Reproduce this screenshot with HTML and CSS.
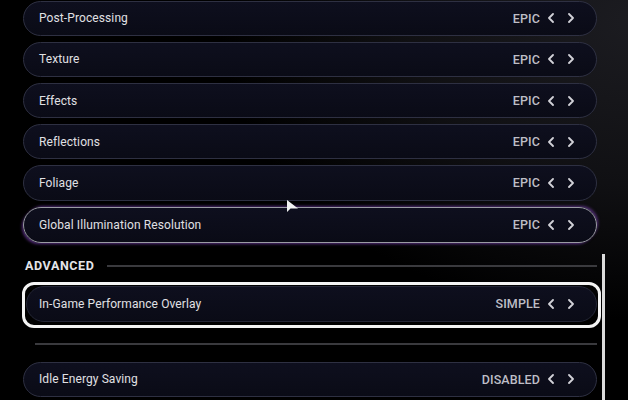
FILE: index.html
```html
<!DOCTYPE html>
<html>
<head>
<meta charset="utf-8">
<link rel="stylesheet" href="styles.css">
</head>
<body>
<div class="page">
  <div class="list">
    <div class="row"><span class="label">Post-Processing</span><span class="value">EPIC</span><span class="chevs"><svg width="8" height="10" viewBox="0 0 8 10"><path d="M6 1 L2 5 L6 9"/></svg><svg width="8" height="10" viewBox="0 0 8 10"><path d="M2 1 L6 5 L2 9"/></svg></span></div>
    <div class="row"><span class="label">Texture</span><span class="value">EPIC</span><span class="chevs"><svg width="8" height="10" viewBox="0 0 8 10"><path d="M6 1 L2 5 L6 9"/></svg><svg width="8" height="10" viewBox="0 0 8 10"><path d="M2 1 L6 5 L2 9"/></svg></span></div>
    <div class="row"><span class="label">Effects</span><span class="value">EPIC</span><span class="chevs"><svg width="8" height="10" viewBox="0 0 8 10"><path d="M6 1 L2 5 L6 9"/></svg><svg width="8" height="10" viewBox="0 0 8 10"><path d="M2 1 L6 5 L2 9"/></svg></span></div>
    <div class="row"><span class="label">Reflections</span><span class="value">EPIC</span><span class="chevs"><svg width="8" height="10" viewBox="0 0 8 10"><path d="M6 1 L2 5 L6 9"/></svg><svg width="8" height="10" viewBox="0 0 8 10"><path d="M2 1 L6 5 L2 9"/></svg></span></div>
    <div class="row"><span class="label">Foliage</span><span class="value">EPIC</span><span class="chevs"><svg width="8" height="10" viewBox="0 0 8 10"><path d="M6 1 L2 5 L6 9"/></svg><svg width="8" height="10" viewBox="0 0 8 10"><path d="M2 1 L6 5 L2 9"/></svg></span></div>
    <div class="row row-glow"><span class="label">Global Illumination Resolution</span><span class="value">EPIC</span><span class="chevs"><svg width="8" height="10" viewBox="0 0 8 10"><path d="M6 1 L2 5 L6 9"/></svg><svg width="8" height="10" viewBox="0 0 8 10"><path d="M2 1 L6 5 L2 9"/></svg></span></div>

    <div class="section"><span class="section-title">ADVANCED</span><span class="section-line"></span></div>

    <div class="focus">
      <div class="row row-inner"><span class="label">In-Game Performance Overlay</span><span class="value">SIMPLE</span><span class="chevs"><svg width="8" height="10" viewBox="0 0 8 10"><path d="M6 1 L2 5 L6 9"/></svg><svg width="8" height="10" viewBox="0 0 8 10"><path d="M2 1 L6 5 L2 9"/></svg></span></div>
    </div>

    <div class="divider"></div>

    <div class="row"><span class="label">Idle Energy Saving</span><span class="value">DISABLED</span><span class="chevs"><svg width="8" height="10" viewBox="0 0 8 10"><path d="M6 1 L2 5 L6 9"/></svg><svg width="8" height="10" viewBox="0 0 8 10"><path d="M2 1 L6 5 L2 9"/></svg></span></div>
  </div>
  <div class="scrollbar"></div>
</div>
<svg class="cursor" width="14" height="16" viewBox="0 0 14 16"><path d="M1 1 L1 13 L4.5 9.5 L12 9.5 Z" fill="#f2f2f2"/></svg>
</body>
</html>
```
FILE: styles.css
```css
html, body {
  margin: 0;
  padding: 0;
}
body {
  width: 628px;
  height: 400px;
  overflow: hidden;
  position: relative;
  background:
    radial-gradient(ellipse 420px 300px at 640px 20px, #1c1c21 0%, #101013 55%, rgba(0,0,0,0) 100%),
    #000;
  font-family: "Roboto", "Liberation Sans", sans-serif;
}
.page {
  display: flex;
  padding-left: 23px;
  padding-top: 0.6px;
}
.list {
  width: 574px;
  display: flex;
  flex-direction: column;
}
.row {
  box-sizing: border-box;
  height: 35.2px;
  flex-shrink: 0;
  margin-bottom: 6px;
  display: flex;
  align-items: center;
  padding: 0 21px 0 15px;
  border: 1.5px solid #2e3042;
  border-radius: 18px;
  background: linear-gradient(180deg, #0e0f1e 0%, #0a0b16 100%);
}
.label {
  flex: 1;
  color: #e0e0e4;
  font-size: 12px;
  font-weight: 400;
  letter-spacing: 0.1px;
}
.value {
  color: #bebec6;
  font-size: 12.5px;
  font-weight: 500;
  letter-spacing: 0.1px;
  margin-right: 7px;
}
.chevs {
  display: flex;
  gap: 12px;
  align-items: center;
}
.chevs svg path {
  fill: none;
  stroke: #d2d2d8;
  stroke-width: 1.8;
  stroke-linecap: round;
  stroke-linejoin: round;
}
.row-glow {
  height: 36px;
  border-color: #9a9ba4;
  box-shadow: -2px 2px 3px -1px rgba(150, 80, 220, 0.55), 2px -2px 3px -1px rgba(150, 80, 220, 0.5);
}
.section {
  display: flex;
  align-items: center;
  gap: 13px;
  margin-top: 7px;
  padding-left: 2px;
  height: 20px;
  flex-shrink: 0;
}
.section-title {
  color: #e4e4e8;
  font-size: 12.5px;
  font-weight: 700;
  letter-spacing: 0.6px;
}
.section-line {
  flex: 1;
  height: 2px;
  background: #3a3a3e;
}
.focus {
  margin-top: 6px;
  margin-right: -4px;
  margin-left: -1px;
  border: 3px solid #f4f4f4;
  border-radius: 12px;
  padding: 1px 1px 3px 1px;
  flex-shrink: 0;
}
.row-inner {
  margin-bottom: 0;
  height: 36px;
  padding-left: 12px;
  border-color: #242636;
  border-radius: 19px;
}
.divider {
  height: 2px;
  background: #3a3a3e;
  margin: 15px 0 17px 12px;
  flex-shrink: 0;
}
.scrollbar {
  width: 3px;
  height: 147px;
  margin-top: 253px;
  margin-left: 5px;
  background: #dcdcdc;
}
.cursor {
  position: absolute;
  left: 286px;
  top: 199px;
}
```
